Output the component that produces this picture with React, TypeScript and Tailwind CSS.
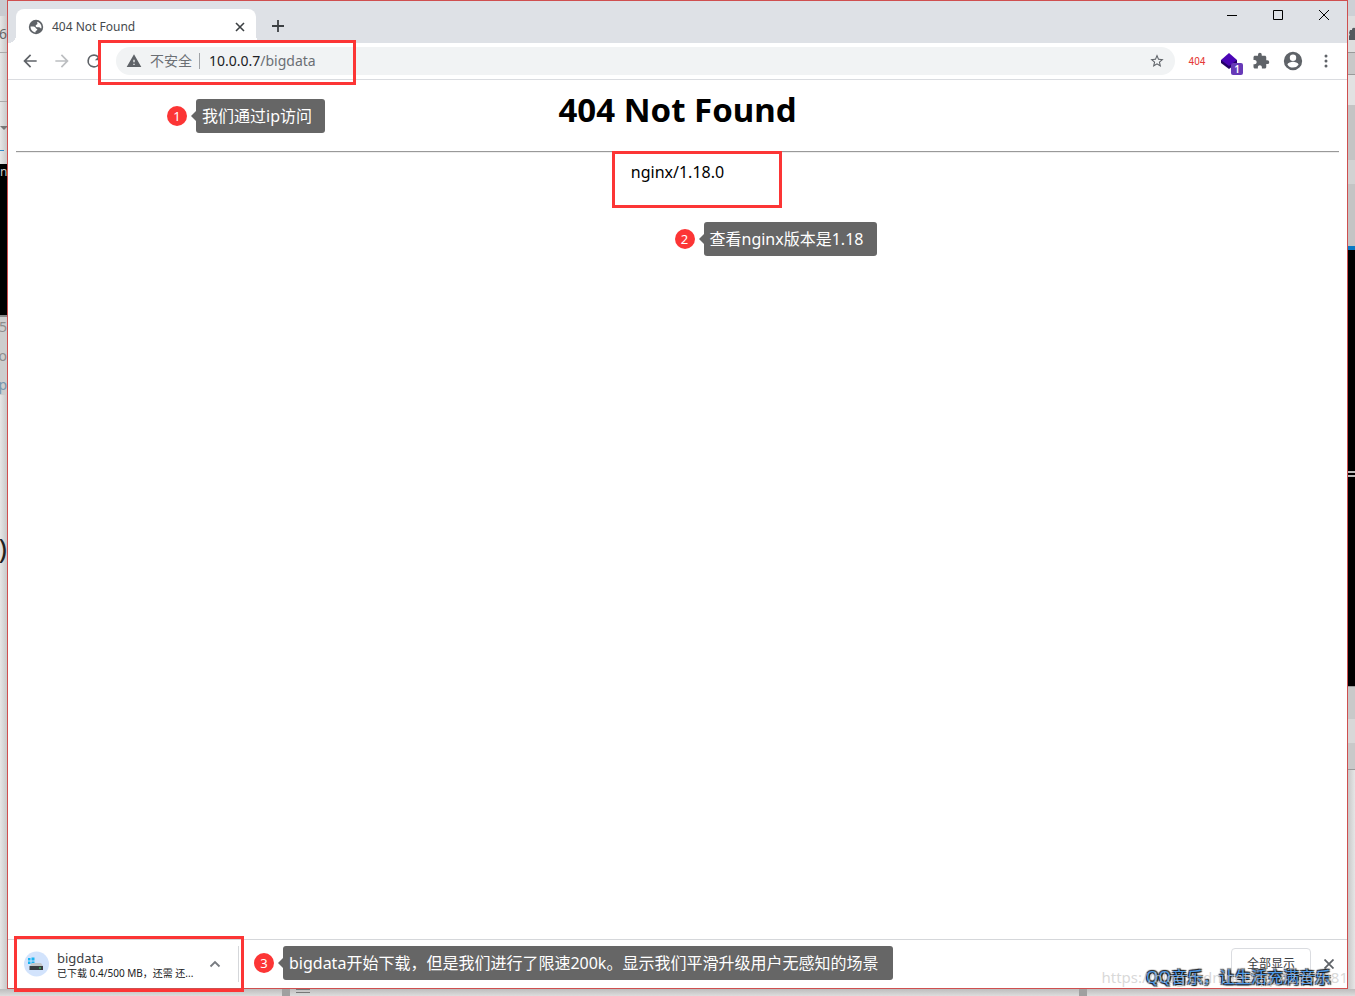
import React from "react";

const ui = "font-['Noto_Sans','Noto_Sans_CJK_SC',sans-serif]";

function Callout({ n, text, place, width }: { n: number; text: string; place: string; width: string }) {
  return (
    <div className={`absolute z-20 flex items-center ${place}`}>
      <span className="flex size-5 items-center justify-center rounded-full bg-[#fc3535] text-[13px] leading-5 text-white">{n}</span>
      <span className="ml-1 border-y-5 border-r-5 border-y-transparent border-r-[#666666]" />
      <span className={`h-[34px] rounded-[3px] bg-[#666666] pl-1.5 text-left text-base leading-[34px] whitespace-nowrap text-white ${width}`}>{text}</span>
    </div>
  );
}

function Highlight({ place }: { place: string }) {
  return <div className={`pointer-events-none absolute z-10 border-3 border-[#fc3535] ${place}`} />;
}

function TabStrip() {
  return (
    <header className="flex h-[42px] items-end bg-[#dee1e6]">
      <div className="relative ml-2 flex h-[34px] w-60 items-center rounded-t-lg bg-white pt-0.5 pl-3">
        <span className="absolute bottom-0 -left-2 size-2 bg-[radial-gradient(circle_at_0_0,#dee1e6_8px,white_8px)]" />
        <span className="absolute -right-2 bottom-0 size-2 bg-[radial-gradient(circle_at_100%_0,#dee1e6_8px,white_8px)]" />
        <svg viewBox="0 0 16 16" className="size-4">
          <circle cx="8" cy="8" r="7.2" fill="#5f6368" />
          <path d="M2.500 7.600C5 7.400 7.300 7.500 7.700 9c.2.900 1.500.5 1.600 1.500.1 1.200-1.700.9-1.800 2v1C4.700 13.200 2.500 10.800 2.500 7.600zM9.300 2.700c2.400.6 4.200 2.700 4.200 5.300 0 .5-.1 1-.3 1.400-1-.1-1.100-1-2.100-1.100-1.400-.2-3.400.1-3.500-1.400 0-1.400 1.500-1 1.800-2 .2-.8-.4-1.300-.1-2.200z" fill="#fff" />
        </svg>
        <span className="ml-2 flex-1 text-xs leading-4 text-[#45494d]">404 Not Found</span>
        <button aria-label="关闭标签页" className="mr-3 size-2">
          <svg viewBox="0 0 8 8" className="size-2 overflow-visible"><path d="M0 0 8 8M8 0 0 8" stroke="#3c4043" strokeWidth="1.6" /></svg>
        </button>
      </div>
      <button aria-label="新标签页" className="mb-[11px] ml-4 size-3">
        <svg viewBox="0 0 12 12" className="size-3"><path d="M6 0V12M0 6H12" stroke="#3c4043" strokeWidth="1.8" /></svg>
      </button>
      <div className="ml-auto flex gap-9 self-start pt-[9px] pr-[18px]">
        <button aria-label="最小化" className="size-[10px]">
          <svg viewBox="0 0 10 10" className="size-[10px]"><path d="M0 5.500H10" stroke="#000" /></svg>
        </button>
        <button aria-label="最大化" className="size-[10px]">
          <svg viewBox="0 0 10 10" className="size-[10px]"><path d="M.5.5H9.500V9.500H.5z" fill="none" stroke="#000" /></svg>
        </button>
        <button aria-label="关闭" className="size-[10px]">
          <svg viewBox="0 0 10 10" className="size-[10px]"><path d="M0 0 10 10M10 0 0 10" stroke="#000" /></svg>
        </button>
      </div>
    </header>
  );
}

function Toolbar() {
  return (
    <nav className="relative flex h-[37px] items-center border-b border-[#dadce0] bg-white pl-3">
      <div className="flex gap-3">
        <button aria-label="后退">
          <svg viewBox="0 0 24 24" className="size-5" fill="#5f6368"><path d="M20 11H7.830l5.590-5.590L12 4l-8 8 8 8 1.410-1.410L7.830 13H20z" /></svg>
        </button>
        <button aria-label="前进">
          <svg viewBox="0 0 24 24" className="size-5" fill="#bcbec1"><path d="M12 4l-1.410 1.410L16.170 11H4v2h12.170l-5.580 5.590L12 20l8-8z" /></svg>
        </button>
        <button aria-label="重新加载">
          <svg viewBox="0 0 24 24" className="size-5" fill="#5f6368"><path d="M17.650 6.350A7.960 7.960 0 0 0 12 4a8 8 0 1 0 7.730 10h-2.080A6 6 0 1 1 12 6c1.660 0 3.140.69 4.220 1.780L13 11h7V4z" /></svg>
        </button>
      </div>
      <div className="ml-3 flex h-7 flex-1 items-center rounded-full bg-[#f1f3f4] pl-2.5">
        <svg viewBox="0 0 24 24" className="size-4" fill="#5f6368"><path d="M1 21h22L12 2zm12-3h-2v-2h2zm0-4h-2v-4h2z" /></svg>
        <span className="ml-2 text-sm leading-5 text-[#6b6f74]">不安全</span>
        <span className="ml-[7px] h-4 w-px bg-[#a0a3a7]" />
        <a href="#bigdata" className="ml-[9px] text-sm leading-5 text-[#6b6f74]"><span className="text-[#202124]">10.0.0.7</span>/bigdata</a>
        <button aria-label="添加书签" className="mr-2.5 ml-auto">
          <svg viewBox="0 0 24 24" className="size-4" fill="#5f6368"><path d="M22 9.240l-7.190-.62L12 2 9.190 8.630 2 9.240l5.460 4.730L5.820 21 12 17.270 18.180 21l-1.630-7.030zM12 15.400l-3.760 2.270 1-4.280-3.320-2.880 4.380-.38L12 6.100l1.710 4.040 4.380.38-3.320 2.880 1 4.280z" /></svg>
        </button>
      </div>
      <div className="flex items-center pr-[11px]">
        <button className="ml-3 w-5 pt-0.5 text-center font-['Roboto',sans-serif] text-[10px] leading-5 text-[#e53935]">404</button>
        <button aria-label="扩展" className="relative ml-3 size-5">
          <svg viewBox="0 0 20 20" className="size-5"><path d="M2 9v3l8 6 8-6v-3z" fill="#230066" /><path d="M10 2 18 9 10 15 2 9z" fill="#4a05b5" /></svg>
          <span className="absolute top-3 left-3 size-3 rounded-[2px] bg-[#673ab7] text-center text-[10px] leading-3 font-semibold text-white">1</span>
        </button>
        <button aria-label="扩展程序" className="ml-[13px]">
          <svg viewBox="0 0 24 24" className="size-[18px]" fill="#5f6368"><path d="M20.500 11H19V7c0-1.100-.9-2-2-2h-4V3.500a2.500 2.500 0 0 0-5 0V5H4c-1.100 0-1.990.9-1.990 2v3.800H3.500c1.490 0 2.700 1.210 2.700 2.700s-1.210 2.700-2.700 2.700H2V20c0 1.100.9 2 2 2h3.800v-1.500c0-1.490 1.210-2.700 2.700-2.700s2.700 1.210 2.700 2.700V22H17c1.100 0 2-.9 2-2v-4h1.500a2.500 2.500 0 0 0 0-5z" /></svg>
        </button>
        <button aria-label="用户" className="ml-3">
          <svg viewBox="0 0 24 24" className="size-[22px]" fill="#5f6368"><path d="M12 2a10 10 0 1 0 0 20 10 10 0 0 0 0-20zm0 3a3.500 3.500 0 1 1 0 7 3.500 3.500 0 0 1 0-7zm0 14.200a7.200 7.200 0 0 1-6-3.220c.03-1.990 4-3.080 6-3.080s5.970 1.090 6 3.080a7.200 7.200 0 0 1-6 3.220z" /></svg>
        </button>
        <button aria-label="菜单" className="ml-3">
          <svg viewBox="0 0 20 18" className="h-[18px] w-5" fill="#5f6368"><circle cx="10" cy="4" r="1.500" /><circle cx="10" cy="9" r="1.500" /><circle cx="10" cy="14" r="1.500" /></svg>
        </button>
      </div>
    </nav>
  );
}

function DownloadBar() {
  return (
    <footer className="relative flex h-[49px] items-center border-t border-[#d5d7da] bg-white pl-[15px]">
      <svg viewBox="0 0 26 26" className="size-[26px]">
        <circle cx="13.500" cy="13" r="12.500" fill="#d2e3fc" />
        <path d="M5 7h2.500v2.500H5zM8.500 6.500h3v3h-3zM5 10.500h2.500V13H5zM8.500 10.500h3v2.500h-3z" fill="#18b4f1" />
        <path d="M9 12h9l2 3H6.500z" fill="#c4c7ca" />
        <path d="M6.500 15H20v4H6.500z" fill="#3a3d40" />
        <path d="M16 16.500h2v1h-2z" fill="#39e56b" />
      </svg>
      <div className="ml-2 w-[144px] pt-[3px]">
        <p className="text-[13px] leading-[15px] text-[#3c4043]">bigdata</p>
        <p className="text-[10px] leading-[14px] whitespace-nowrap text-[#202124]">已下载 0.4/500 MB，还需 还...</p>
      </div>
      <button aria-label="更多操作" className="ml-2 w-3">
        <svg viewBox="0 0 12 12" className="size-3"><path d="M1.500 8.500 6 4l4.500 4.500" fill="none" stroke="#777b80" strokeWidth="1.800" /></svg>
      </button>
      <span className="ml-[17px] h-9 w-px bg-[#d5d7da]" />
      <button className="ml-auto h-8 w-20 rounded border border-[#dadce0] text-xs text-[#3c4043]">全部显示</button>
      <button aria-label="关闭下载栏" className="mr-[13px] ml-[13px]">
        <svg viewBox="0 0 10 10" className="size-[10px]"><path d="M.5.5 9.500 9.500M9.500.5.5 9.500" stroke="#5f6368" strokeWidth="1.800" /></svg>
      </button>
      <Highlight place="-top-1 left-1.5 h-[56px] w-[230px]" />
      <Callout n={3} text="bigdata开始下载，但是我们进行了限速200k。显示我们平滑升级用户无感知的场景" place="left-[246px] top-1.5" width="w-[610px]" />
      <p className="absolute right-4 -bottom-px z-10 text-base leading-6 whitespace-nowrap text-[#4f9be8] [text-shadow:1px_1px_1px_#111,-1px_-1px_1px_#222,1px_-1px_1px_#222,-1px_1px_1px_#222]">QQ音乐，让生活充满音乐</p>
      <p className="absolute -right-px -bottom-px z-10 text-[15px] leading-6 whitespace-nowrap text-[#c8c8c8]/70">https://blog.csdn.net/qq_42267081</p>
    </footer>
  );
}

function LeftEdge() {
  return (
    <aside className="flex w-[7px] shrink-0 flex-col overflow-hidden bg-linear-to-r from-[#e6e6e6] to-[#c9c9c9] text-sm text-[#8d8d8d]">
      <div className="h-4 bg-[#c9cbd0]" />
      <div className="flex h-9 items-center justify-end text-[#666666]">96</div>
      <div className="h-[50px] border-y border-[#aaaaaa]" />
      <div className="h-[62px] pt-6"><div className="border-x-4 border-t-4 border-x-transparent border-t-[#777777]" /><div className="mt-5 h-px w-1 bg-[#318ac7]" /></div>
      <div className="h-[151px] bg-black text-xs text-[#c8c8c8]">n:</div>
      <div className="flex h-20 flex-col items-end justify-between border-t-2 border-[#888888] bg-[#cdcdcd]"><span>5</span><span>o</span><span className="text-[#7797ae]">p</span></div>
      <div className="flex flex-1 flex-col items-end pt-[133px] text-[28px] text-[#222222]">)</div>
    </aside>
  );
}

function RightEdge() {
  return (
    <aside className="flex w-[7px] shrink-0 flex-col overflow-hidden bg-linear-to-l from-[#e6e6e6] to-[#c9c9c9]">
      <div className="h-4 bg-[#cdd0d5]" />
      <div className="flex h-9 items-center bg-[#dedede]">
        <svg viewBox="0 0 7 14" className="h-[14px] w-[7px]" fill="#55595e"><path d="M2 3h2a2 2 0 0 1 3-2v12H1v-4a2 2 0 0 0 0-3z" /></svg>
      </div>
      <div className="h-[23px] border-y border-[#999999] bg-[#c8c8c8]" />
      <div className="h-[30px] bg-[#e2e2e2]" />
      <div className="h-[55px] bg-[#c4c4c4]" />
      <div className="h-6 bg-[#d2d2d2]" />
      <div className="h-[62px] bg-[#c4c4c4]" />
      <div className="h-1 bg-[#0879c4]" />
      <div className="h-[221px] bg-black" />
      <div className="h-1.5 border-y-2 border-[#bbbbbb] bg-black" />
      <div className="h-[209px] bg-black" />
      <div className="h-[84px] border-y border-[#999999] bg-[#c9c9c9] pt-8"><div className="h-6 bg-[#d8d8d8]" /></div>
      <div className="flex-1" />
    </aside>
  );
}

export default function App() {
  return (
    <div className={`flex min-h-screen flex-col overflow-hidden bg-[#e0e0e0] ${ui}`}>
      <div className="flex flex-1">
        <LeftEdge />
        <div className="relative flex min-w-0 flex-1 flex-col border border-[#cf4f4f] bg-white">
          <TabStrip />
          <Toolbar />
          <main className="flex-1 px-2 text-center text-black">
            <h1 className="pt-2 text-[33px] leading-[43px] font-bold">404 Not Found</h1>
            <hr className="mt-5 h-0.5 border-t border-b border-t-[#999999] border-b-[#eeeeee]" />
            <div className="relative mx-auto w-[94px] pt-[7px] text-base leading-6">
              nginx/1.18.0
              <Highlight place="-top-0.5 -left-[19px] h-[57px] w-[170px]" />
              <Callout n={2} text="查看nginx版本是1.18" place="left-11 top-[69px]" width="w-[173px]" />
            </div>
          </main>
          <DownloadBar />
          <Highlight place="left-[90px] top-[39px] h-[45px] w-[258px]" />
          <Callout n={1} text="我们通过ip访问" place="left-[159px] top-[98px]" width="w-[129px]" />
        </div>
        <RightEdge />
      </div>
      <div className="flex h-[7px] justify-between bg-linear-to-b from-[#bdbdbd] to-[#dddddd] pr-[268px] pl-[282px]">
        <div className="flex w-7"><span className="w-2 bg-[#a0a0a0]" /><span className="ml-1.5 h-1 flex-1 border-y border-[#777777]" /></div>
        <span className="w-2 bg-[#a0a0a0]" />
      </div>
    </div>
  );
}
